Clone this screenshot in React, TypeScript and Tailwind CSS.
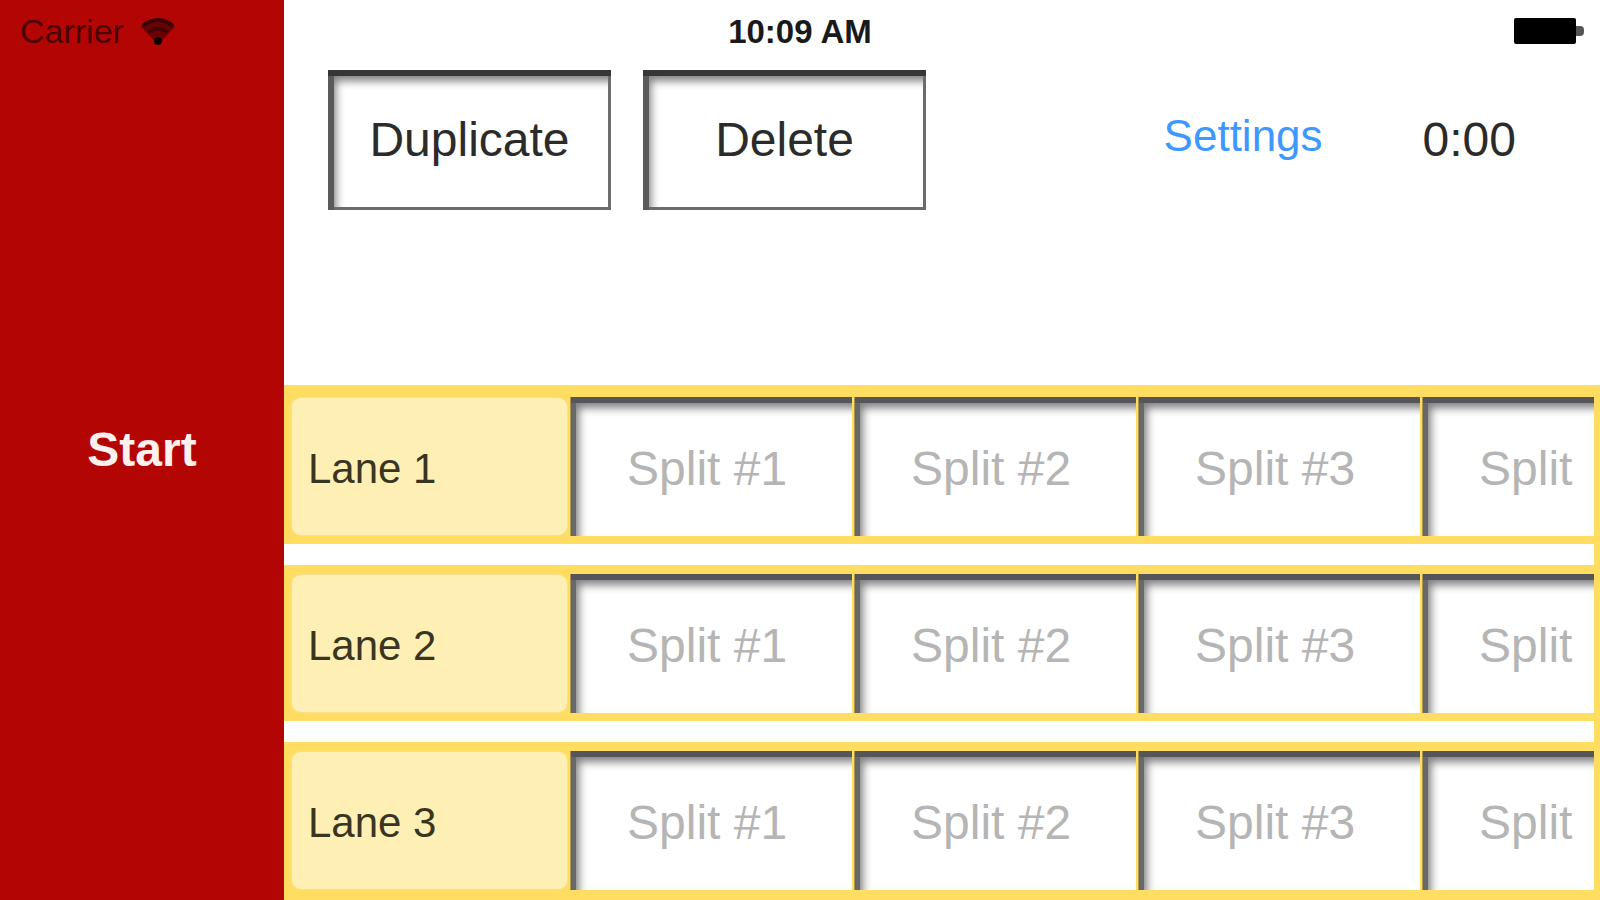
import { useState } from 'react';

const lanes = ['Lane 1', 'Lane 2', 'Lane 3'];
const splits = ['Split #1', 'Split #2', 'Split #3'];

function WifiIcon() {
  return (
    <svg viewBox="0 0 36 29" className="w-9 h-[29px]" aria-hidden="true">
      <path d="M18 28L1 9.500C10 -1 26 -1 35 9.500z" fill="#6a0303" />
      <path d="M3 9a21.500 21.500 0 0 1 30 0" fill="none" stroke="#3a0202" strokeWidth="4" />
      <path d="M8.500 15.500a14 14 0 0 1 19 0" fill="none" stroke="#450202" strokeWidth="4" />
      <circle cx="18" cy="24" r="4" fill="#0c0000" />
    </svg>
  );
}

function BatteryIcon() {
  return (
    <svg viewBox="0 0 70 26" className="w-[70px] h-[26px]" aria-hidden="true">
      <rect x="0" y="0" width="62" height="26" rx="2" fill="#000" />
      <path d="M62 8h4a4 4 0 0 1 4 4v2a4 4 0 0 1-4 4h-4z" fill="#555" />
    </svg>
  );
}

function StatusBar() {
  return (
    <div className="absolute inset-x-0 top-0 h-[62px] pl-4 pr-4 grid grid-cols-3 items-center pointer-events-none">
      <div className="flex items-center gap-4 pl-1 text-[34px] leading-none text-[#4a0202]">
        <span>Carrier</span>
        <WifiIcon />
      </div>
      <div className="text-center text-[33px] leading-none font-bold text-[#1a1a1a]">10:09 AM</div>
      <div className="flex justify-end">
        <BatteryIcon />
      </div>
    </div>
  );
}

function ToolButton({ label }: { label: string }) {
  return (
    <button
      type="button"
      className="w-[283px] h-[140px] bg-white text-5xl text-[#2b2b2b] shadow-[inset_0_6px_#363636,inset_6px_0_#5a5a5a,inset_-3px_-3px_#6b6b6b,inset_8px_11px_8px_rgba(0,0,0,0.5)]"
    >
      {label}
    </button>
  );
}

function SplitInput({ lane, label, last }: { lane: string; label: string; last?: boolean }) {
  return (
    <input
      type="text"
      placeholder={label}
      aria-label={`${lane} ${label}`}
      className={`h-[139px] min-w-0 bg-white pl-14 pt-1 text-5xl text-[#2b2b2b] placeholder:text-[#b5b5b5] outline-none rounded-none shadow-[inset_0_6px_#56565a,inset_5px_0_#68686a,inset_8px_11px_8px_rgba(0,0,0,0.5),-1px_0_#a8944e] ${
        last ? 'flex-1' : 'w-[281px] shrink-0'
      }`}
    />
  );
}

export default function App() {
  const [running, setRunning] = useState(false);

  return (
    <div className="relative min-h-screen flex bg-white font-['Liberation_Sans',Arial,sans-serif]">
      <button
        type="button"
        aria-pressed={running}
        onClick={() => setRunning(!running)}
        className="w-[284px] shrink-0 bg-[#b40505] text-[#fff0f0] text-5xl font-bold"
      >
        Start
      </button>

      <main className="flex-1 min-w-0 flex flex-col">
        <header className="h-[385px] pt-[70px] pl-11 pr-[84px] flex items-start justify-between">
          <div className="flex gap-8">
            <ToolButton label="Duplicate" />
            <ToolButton label="Delete" />
          </div>
          <div className="h-[140px] flex items-center gap-[100px]">
            <a href="#settings" className="pb-2 text-[44px] leading-none text-[#3d98ff]">
              Settings
            </a>
            <span className="text-5xl text-[#2b2b2b]">0:00</span>
          </div>
        </header>

        {/* Lanes */}
        <section className="flex-1 bg-[#ffdd60] pt-[3px]">
          <ul>
            {lanes.map((lane) => (
              <li key={lane} className="border-b-[21px] border-white last:border-b-0 mr-1.5">
                <div className="flex pt-[9px] pb-2 pl-[7px] gap-[3px] bg-[#ffdd60]">
                  <div className="w-[277px] shrink-0 flex items-center pl-4 pt-1 rounded-[10px] border border-[#f8e08c] bg-[#feefb4] text-[42px] text-[#3a3522]">
                    {lane}
                  </div>
                  {splits.map((split) => (
                    <SplitInput key={split} lane={lane} label={split} />
                  ))}
                  <SplitInput lane={lane} label="Split" last />
                </div>
              </li>
            ))}
          </ul>
        </section>
      </main>

      <StatusBar />
    </div>
  );
}
